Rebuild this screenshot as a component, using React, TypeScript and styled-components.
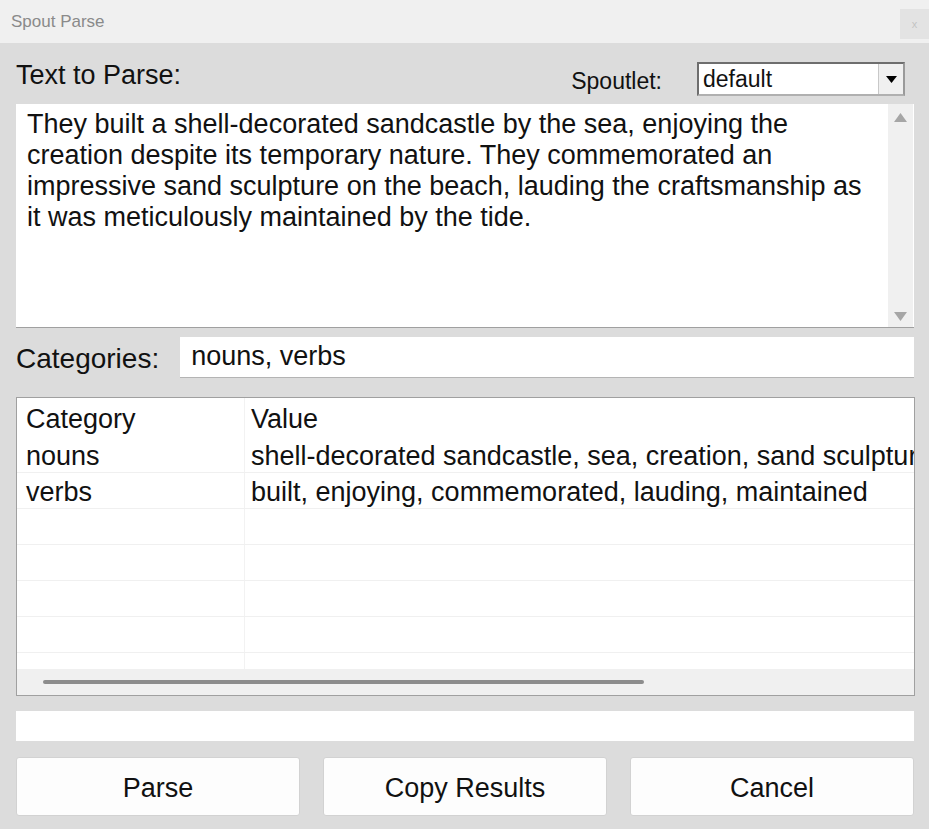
import * as React from 'react'
import styled, {createGlobalStyle} from 'styled-components'

const GlobalStyle = createGlobalStyle`
  html, body {
    margin: 0;
    padding: 0;
    background: #dcdcdc;
  }
  body {
    font-family: "Liberation Sans", Arial, sans-serif;
    color: #111;
  }
`

const Window = styled.div`
  width: 929px;
  height: 829px;
  display: flex;
  flex-direction: column;
  background: #dcdcdc;
  overflow: hidden;
`

const TitleBar = styled.div`
  height: 43px;
  flex: none;
  display: flex;
  align-items: center;
  justify-content: space-between;
  background: #f0f0f0;
  padding-left: 11px;
`

const Title = styled.span`
  font-size: 17px;
  color: #8a8a8a;
`

const CloseBox = styled.div`
  width: 29px;
  height: 30px;
  margin-top: 4px;
  background: #e3e3e3;
  color: #c4c4c4;
  font-size: 11px;
  display: flex;
  align-items: center;
  justify-content: center;
`

const Body = styled.div`
  flex: 1;
  display: flex;
  flex-direction: column;
  padding: 12px 15px 13px 16px;
`

const TopRow = styled.div`
  height: 46px;
  display: flex;
  align-items: center;
`

const BigLabel = styled.span<{$shift?: number; $size?: number}>`
  font-size: ${p => p.$size ?? 27}px;
  margin-top: ${p => p.$shift ?? 0}px;
`

const Spacer = styled.div`
  flex: 1;
`

const SmallLabel = styled.span`
  font-size: 23px;
  margin-top: 6px;
  margin-right: 35px;
`

const Combo = styled.div`
  width: 208px;
  height: 34px;
  box-sizing: border-box;
  margin-right: 9px;
  margin-top: 2px;
  display: flex;
  align-items: stretch;
  background: #fff;
  border: 2px solid #6e6e6e;
  border-right-color: #9a9a9a;
  border-bottom-color: #b0b0b0;
`

const ComboText = styled.span`
  flex: 1;
  font-size: 23px;
  line-height: 30px;
  padding-left: 4px;
`

const ComboArrow = styled.div`
  width: 24px;
  background: #f0f0f0;
  border-left: 1px solid #c8c8c8;
  display: flex;
  align-items: center;
  justify-content: center;
`

const TextArea = styled.div`
  margin-top: 3px;
  height: 224px;
  box-sizing: border-box;
  display: flex;
  background: #fff;
  border-bottom: 1px solid #a0a0a0;
`

const TextBody = styled.div`
  flex: 1;
  padding: 5px 14px 0 11px;
  font-size: 27px;
  line-height: 31px;
`

const VScroll = styled.div`
  width: 25px;
  margin-right: 1px;
  background: #f0f0f0;
  display: flex;
  flex-direction: column;
  justify-content: space-between;
  align-items: center;
  padding: 9px 0 6px;
`

const CatRow = styled.div`
  margin-top: 9px;
  height: 41px;
  display: flex;
  align-items: center;
`

const CatInput = styled.div`
  margin-left: 21px;
  flex: 1;
  height: 41px;
  box-sizing: border-box;
  background: #fff;
  border-bottom: 1px solid #b4b4b4;
  padding-left: 11px;
  font-size: 27px;
  line-height: 38px;
`

const Table = styled.div`
  margin-top: 19px;
  margin-right: -1px;
  height: 299px;
  box-sizing: border-box;
  border: 1px solid #a0a0a0;
  background: #fff;
  display: flex;
  flex-direction: column;
  overflow: hidden;
`

const Rows = styled.div`
  flex: 1;
  overflow: hidden;
`

const Row = styled.div<{$height: number; $line?: boolean}>`
  height: ${p => p.$height}px;
  box-sizing: border-box;
  display: grid;
  grid-template-columns: 227px 1fr;
  border-bottom: ${p => (p.$line ? '1px solid #f0f0f0' : 'none')};
  font-size: 27px;
`

const Cell = styled.div<{$divider?: boolean}>`
  padding: 3px 0 0 ${p => (p.$divider ? 6 : 9)}px;
  display: flex;
  align-items: center;
  white-space: nowrap;
  overflow: hidden;
  border-left: ${p => (p.$divider ? '1px solid #f2f2f2' : 'none')};
`

const HScroll = styled.div`
  height: 26px;
  flex: none;
  background: #f0f0f0;
  display: flex;
  align-items: center;
  padding-left: 26px;
`

const Thumb = styled.div`
  width: 601px;
  height: 4px;
  border-radius: 2px;
  background: #8c8c8c;
`

const Status = styled.div`
  margin-top: 15px;
  height: 30px;
  background: #fff;
`

const Buttons = styled.div`
  margin-top: 16px;
  display: grid;
  grid-template-columns: repeat(3, 1fr);
  column-gap: 23px;
`

const Button = styled.button`
  height: 59px;
  box-sizing: border-box;
  border: 1px solid #d2d2d2;
  border-radius: 3px;
  background: #fdfdfd;
  font-family: "Liberation Sans", Arial, sans-serif;
  font-size: 27px;
  color: #111;
  padding: 3px 0 0;
`

const Tri = ({up}: {up?: boolean}) => (
  <svg width='13' height='9' viewBox='0 0 13 9'>
    <path d={up ? 'M6.5 0 L13 9 L0 9 Z' : 'M0 0 L13 0 L6.5 9 Z'} fill='#a6a6a6' />
  </svg>
)

const DropArrow = () => (
  <svg width='11' height='7' viewBox='0 0 11 7'>
    <path d='M0 0 L11 0 L5.5 7 Z' fill='#000' />
  </svg>
)

const results = [
  ['nouns', 'shell-decorated sandcastle, sea, creation, sand sculpture, beach, craftsmanship, tide'],
  ['verbs', 'built, enjoying, commemorated, lauding, maintained'],
  ['', ''],
  ['', ''],
  ['', ''],
  ['', ''],
  ['', ''],
]

export default function App() {
  return (
    <Window>
      <GlobalStyle />
      <TitleBar>
        <Title>Spout Parse</Title>
        <CloseBox>x</CloseBox>
      </TitleBar>
      <Body>
        <TopRow>
          <BigLabel $shift={-6}>Text to Parse:</BigLabel>
          <Spacer />
          <SmallLabel>Spoutlet:</SmallLabel>
          <Combo>
            <ComboText>default</ComboText>
            <ComboArrow>
              <DropArrow />
            </ComboArrow>
          </Combo>
        </TopRow>
        <TextArea>
          <TextBody>
            They built a shell-decorated sandcastle by the sea, enjoying the creation despite its
            temporary nature. They commemorated an impressive sand sculpture on the beach, lauding
            the craftsmanship as it was meticulously maintained by the tide.
          </TextBody>
          <VScroll>
            <Tri up />
            <Tri />
          </VScroll>
        </TextArea>
        <CatRow>
          <BigLabel $shift={3} $size={28}>Categories:</BigLabel>
          <CatInput>nouns, verbs</CatInput>
        </CatRow>
        <Table>
          <Rows>
            <Row $height={39}>
              <Cell>Category</Cell>
              <Cell $divider>Value</Cell>
            </Row>
            {results.map(([cat, val], i) => (
              <Row key={i} $height={36} $line>
                <Cell>{cat}</Cell>
                <Cell $divider>{val}</Cell>
              </Row>
            ))}
          </Rows>
          <HScroll>
            <Thumb />
          </HScroll>
        </Table>
        <Status />
        <Buttons>
          <Button>Parse</Button>
          <Button>Copy Results</Button>
          <Button>Cancel</Button>
        </Buttons>
      </Body>
    </Window>
  )
}
